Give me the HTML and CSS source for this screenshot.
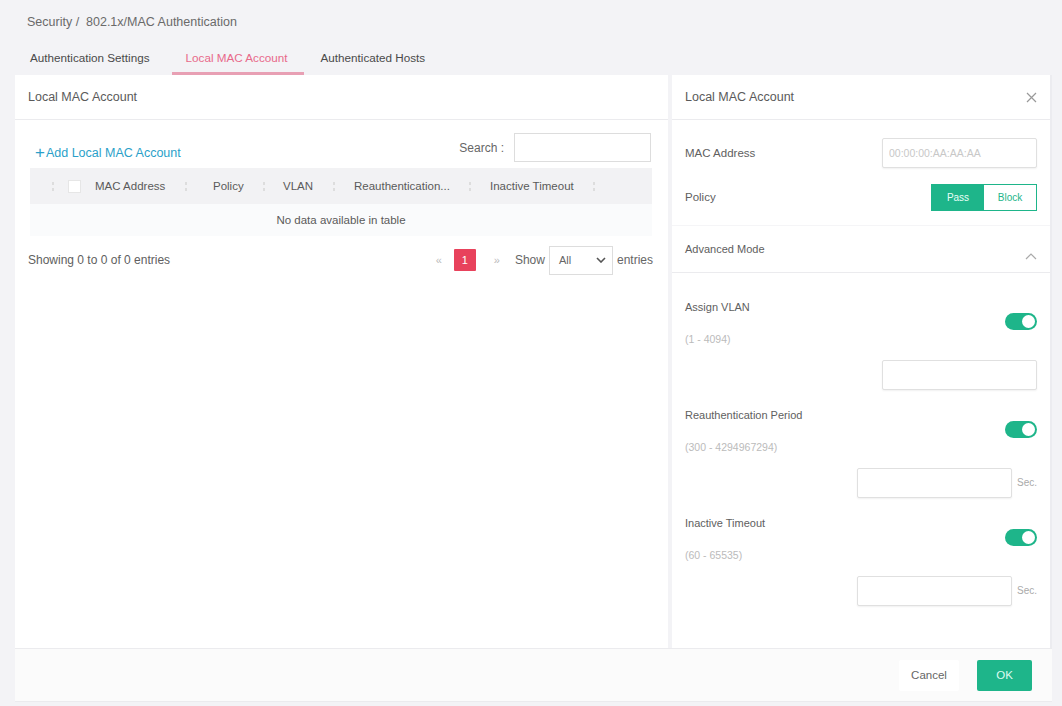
FILE: index.html
```html
<!DOCTYPE html>
<html lang="en">
<head>
  <meta charset="UTF-8">
  <title>Local MAC Account</title>
  <link rel="stylesheet" href="styles.css">
</head>
<body>
  <div class="page">
    <div class="breadcrumb">Security / &nbsp;802.1x/MAC Authentication</div>
    <div class="tabs">
      <span class="tab">Authentication Settings</span>
      <span class="tab active">Local MAC Account</span>
      <span class="tab">Authenticated Hosts</span>
    </div>

    <div class="main">
      <section class="panel list-panel">
        <div class="panel-head">Local MAC Account</div>
        <div class="list-body">
          <div class="toolbar">
            <a class="add-link"><span class="plus">+</span>Add Local MAC Account</a>
            <div class="search">
              <span>Search :</span>
              <input type="text">
            </div>
          </div>
          <table class="grid">
            <thead>
              <tr>
                <th class="c-check"><span class="sort"></span><span class="box"></span></th>
                <th class="c-mac">MAC Address<span class="sort"></span></th>
                <th class="c-policy">Policy<span class="sort"></span></th>
                <th class="c-vlan">VLAN<span class="sort"></span></th>
                <th class="c-reauth">Reauthentication...<span class="sort"></span></th>
                <th class="c-timeout">Inactive Timeout<span class="sort"></span></th>
              </tr>
            </thead>
            <tbody>
              <tr><td colspan="6" class="empty">No data available in table</td></tr>
            </tbody>
          </table>
          <div class="table-foot">
            <span>Showing 0 to 0 of 0 entries</span>
            <div class="pager">
              <span class="arrow prev">&laquo;</span>
              <span class="page-num">1</span>
              <span class="arrow next">&raquo;</span>
              <span class="show">Show</span>
              <div class="select">All
                <svg width="10" height="6" viewBox="0 0 10 6"><path d="M1 1l4 4 4-4" fill="none" stroke="#555" stroke-width="1.6"/></svg>
              </div>
              <span>entries</span>
            </div>
          </div>
        </div>
      </section>

      <section class="panel edit-panel">
        <div class="panel-head">Local MAC Account
          <svg class="close" width="11" height="11" viewBox="0 0 11 11"><path d="M1 1l9 9M10 1l-9 9" stroke="#999" stroke-width="1.2"/></svg>
        </div>
        <div class="form">
          <div class="row">
            <label>MAC Address</label>
            <input type="text" class="field" placeholder="00:00:00:AA:AA:AA">
          </div>
          <div class="row">
            <label>Policy</label>
            <div class="segment">
              <span class="seg on">Pass</span>
              <span class="seg">Block</span>
            </div>
          </div>
        </div>
        <div class="adv-head">Advanced Mode
          <svg width="12" height="7" viewBox="0 0 12 7"><path d="M1 6l5-5 5 5" fill="none" stroke="#aaa" stroke-width="1.2"/></svg>
        </div>
        <div class="adv">
          <div class="option">
            <div class="opt-text">
              <div class="opt-name">Assign VLAN</div>
              <div class="opt-range">(1 - 4094)</div>
            </div>
            <span class="toggle"></span>
          </div>
          <div class="opt-input"><input type="text" class="field"></div>

          <div class="option">
            <div class="opt-text">
              <div class="opt-name">Reauthentication Period</div>
              <div class="opt-range">(300 - 4294967294)</div>
            </div>
            <span class="toggle"></span>
          </div>
          <div class="opt-input"><input type="text" class="field"><span class="unit">Sec.</span></div>

          <div class="option">
            <div class="opt-text">
              <div class="opt-name">Inactive Timeout</div>
              <div class="opt-range">(60 - 65535)</div>
            </div>
            <span class="toggle"></span>
          </div>
          <div class="opt-input"><input type="text" class="field"><span class="unit">Sec.</span></div>
        </div>
      </section>
    </div>

    <div class="footer">
      <button class="btn cancel">Cancel</button>
      <button class="btn ok">OK</button>
    </div>
  </div>
</body>
</html>
```

FILE: styles.css
```css
body {
  margin: 0;
  background: #f3f3f6;
  font-family: 'Liberation Sans', Arial, sans-serif;
  font-size: 12px;
  color: #606060;
}

.page {
  width: 1037px;
  margin-left: 15px;
}

.breadcrumb {
  height: 23px;
  padding: 15px 0 0 12px;
  font-size: 12.5px;
  color: #6a6a6a;
}

.tabs {
  height: 37px;
  display: flex;
  align-items: stretch;
}

.tab {
  padding: 13px 17px 0;
  margin-right: 3px;
  color: #4a4a4a;
  font-size: 11.7px;
}

.tab:first-child {
  padding-left: 15px;
}

.tab.active {
  color: #e8698a;
  border-bottom: 3px solid #e8a0b4;
  padding: 13px 16px 0 14px;
  margin-right: 0;
  margin-left: 2px;
}

.main {
  display: flex;
  gap: 4px;
  height: 573px;
}

.panel {
  background: #fff;
  display: flex;
  flex-direction: column;
}

.list-panel {
  width: 653px;
}

.edit-panel {
  flex: 1;
  border-right: 2px solid #ececf0;
}

.panel-head {
  height: 44px;
  line-height: 47px;
  padding: 0 13px;
  border-bottom: 1px solid #ebebee;
  font-size: 12.5px;
  color: #5a5a5a;
  display: flex;
  align-items: center;
  justify-content: space-between;
}

.list-body {
  padding: 13px 15px 0 15px;
}

.toolbar {
  display: flex;
  justify-content: space-between;
  align-items: flex-end;
  height: 35px;
}

.add-link {
  color: #2a9fc9;
  font-size: 12.5px;
  padding-left: 5px;
  margin-bottom: 5px;
}

.plus {
  font-size: 17px;
  margin-right: 1px;
  vertical-align: -1px;
}

.search {
  display: flex;
  align-items: center;
  gap: 10px;
  color: #666;
  margin-bottom: 6px;
}

.search input {
  width: 137px;
  height: 29px;
  border: 1px solid #ddd;
  box-sizing: border-box;
  margin-right: 2px;
}

.grid {
  width: 622px;
  border-collapse: collapse;
}

.grid th {
  background: #f2f2f4;
  height: 34px;
  font-weight: normal;
  text-align: left;
  color: #5a5a5a;
  font-size: 11.5px;
  white-space: nowrap;
}

.sort {
  display: inline-block;
  width: 5px;
  height: 9px;
  margin-left: 18px;
  vertical-align: middle;
  background:
    linear-gradient(to bottom, #ddd 0 3px, transparent 3px 6px, #ddd 6px) center/2px 9px no-repeat;
}

.c-check {
  width: 63px;
  padding-left: 0;
}

.c-check .sort {
  margin-left: 20px;
  margin-right: 13px;
}

.box {
  display: inline-block;
  width: 11px;
  height: 11px;
  background: #fff;
  border: 1px solid #e6e6e6;
  vertical-align: middle;
}

.c-mac { width: 116px; }
.c-policy { width: 68px; }
.c-vlan { width: 69px; }
.c-reauth { width: 134px; }

.empty {
  height: 30px;
  text-align: center;
  background: #fafbfc;
  color: #5a5a5a;
  font-size: 11.5px;
}

.table-foot {
  display: flex;
  justify-content: space-between;
  align-items: center;
  height: 48px;
  margin-left: -2px;
}

.pager {
  display: flex;
  align-items: center;
  color: #666;
}

.arrow {
  color: #bbb;
  font-size: 11px;
}

.arrow.prev {
  margin-right: 12px;
}

.arrow.next {
  margin: 0 15px 0 18px;
}

.page-num {
  width: 22px;
  height: 22px;
  line-height: 22px;
  text-align: center;
  background: #e8425c;
  color: #fff;
  font-size: 11px;
  border-radius: 1px;
}

.show {
  margin-right: 4px;
}

.select {
  width: 47px;
  height: 27px;
  border: 1px solid #ddd;
  display: flex;
  align-items: center;
  justify-content: space-between;
  padding: 0 6px 0 9px;
  margin-right: 4px;
  font-size: 11px;
}

.form {
  padding: 11px 13px 0 13px;
}

.row {
  display: flex;
  justify-content: space-between;
  align-items: center;
  height: 44px;
}

.row label {
  font-size: 11.5px;
}

.field {
  width: 155px;
  height: 30px;
  box-sizing: border-box;
  border: 1px solid #e0e0e0;
  border-radius: 2px;
  font-family: inherit;
  font-size: 10.5px;
  padding: 0 6px;
  box-shadow: 0 1px 2px rgba(0,0,0,0.06);
}

.field::placeholder {
  color: #c8c8c8;
}

.segment {
  display: flex;
  height: 25px;
  border: 1px solid #1eb58a;
}

.seg {
  width: 52px;
  line-height: 25px;
  text-align: center;
  font-size: 10px;
  color: #1eb58a;
}

.seg.on {
  background: #1eb58a;
  color: #e8fff6;
}

.adv-head {
  margin-top: 6px;
  height: 46px;
  border-top: 1px solid #f5f5f7;
  border-bottom: 1px solid #ebebee;
  padding: 0 13px;
  display: flex;
  justify-content: space-between;
  align-items: center;
  font-size: 11px;
}

.adv-head svg {
  margin-top: 14px;
}

.adv {
  padding: 28px 13px 0 13px;
}

.option {
  display: flex;
  justify-content: space-between;
  align-items: center;
}

.opt-name {
  font-size: 11px;
  height: 32px;
}

.opt-range {
  font-size: 10.5px;
  color: #bbb;
}

.toggle {
  width: 32px;
  height: 17px;
  border-radius: 9px;
  background: #1eb58a;
  position: relative;
  margin-top: -3px;
}

.toggle::after {
  content: "";
  position: absolute;
  right: 2px;
  top: 2px;
  width: 13px;
  height: 13px;
  border-radius: 50%;
  background: #fff;
}

.opt-input {
  display: flex;
  justify-content: flex-end;
  align-items: center;
  margin: 14px 0 19px;
  height: 31px;
}

.opt-input .unit {
  width: 25px;
  text-align: right;
  font-size: 10px;
  color: #aaa;
}

.footer {
  height: 52px;
  background: #fbfbfb;
  border-top: 1px solid #ebebee;
  border-bottom: 1px solid #ebebee;
  display: flex;
  justify-content: flex-end;
  align-items: center;
  gap: 18px;
  padding-right: 20px;
}

.btn {
  height: 31px;
  border: none;
  font-family: inherit;
  font-size: 11.5px;
  border-radius: 2px;
}

.cancel {
  width: 60px;
  background: #fff;
  color: #666;
}

.ok {
  width: 55px;
  background: #1eb58a;
  color: #dffbf0;
}
```
